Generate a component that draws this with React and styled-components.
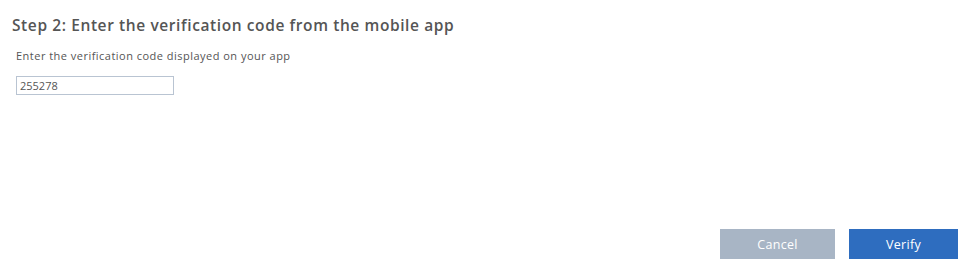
import React, { useState } from 'react';
import styled, { createGlobalStyle } from 'styled-components';

const GlobalStyle = createGlobalStyle`
  html, body {
    margin: 0;
    padding: 0;
    background: #ffffff;
  }
  body {
    font-family: "Open Sans", "Noto Sans", "Liberation Sans", sans-serif;
  }
`;

const Page = styled.div`
  box-sizing: border-box;
  height: 100vh;
  display: flex;
  flex-direction: column;
  padding: 14px 13px 18px 12px;
`;

const Title = styled.h2`
  margin: 0;
  font-size: 15.5px;
  font-weight: 600;
  color: #555555;
  letter-spacing: 0.6px;
  line-height: 22px;
`;

const Hint = styled.p`
  margin: 13px 0 0 4px;
  font-size: 11px;
  color: #555555;
  letter-spacing: 0.48px;
  line-height: 14px;
`;

const CodeInput = styled.input`
  box-sizing: border-box;
  margin: 13px 0 0 4px;
  width: 158px;
  height: 19px;
  padding: 0 3px;
  border: 1px solid #b9c4d2;
  font-family: inherit;
  font-size: 11px;
  color: #555555;
  outline: none;
`;

const Actions = styled.div`
  margin-top: auto;
  display: flex;
  justify-content: flex-end;
  gap: 14px;
`;

const Button = styled.button`
  box-sizing: border-box;
  width: ${(p) => p.$width}px;
  height: 30px;
  border: none;
  font-family: inherit;
  font-size: 12.5px;
  letter-spacing: 0.3px;
  color: #ffffff;
  background-color: ${(p) => (p.$primary ? '#2e6dbf' : '#a8b5c5')};
  cursor: pointer;
`;

const App = () => {
  const [code, setCode] = useState('255278');

  return (
    <Page>
      <GlobalStyle />
      <Title>Step 2: Enter the verification code from the mobile app</Title>
      <Hint>Enter the verification code displayed on your app</Hint>
      <CodeInput value={code} onChange={(e) => setCode(e.target.value)} />
      <Actions>
        <Button $width={115}>Cancel</Button>
        <Button $width={109} $primary>Verify</Button>
      </Actions>
    </Page>
  );
};

export default App;
